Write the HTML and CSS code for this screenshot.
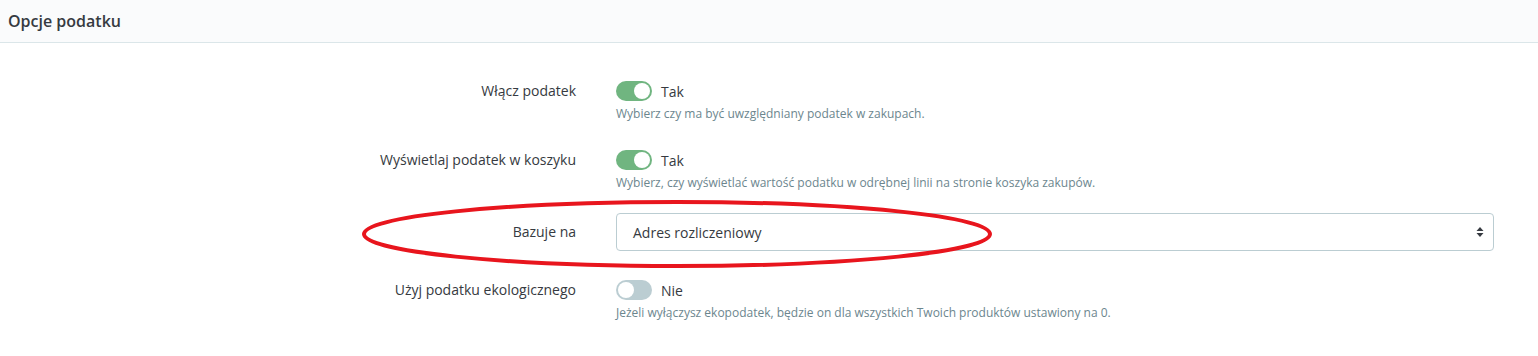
FILE: index.html
```html
<!DOCTYPE html>
<html lang="pl">
<head>
<meta charset="utf-8">
<link rel="stylesheet" href="styles.css">
</head>
<body>
<div class="card">
  <div class="card-header">Opcje podatku</div>
  <div class="card-body">
    <div class="form-row">
      <div class="label">Włącz podatek</div>
      <div class="control">
        <div class="switch-line"><span class="switch on"><span class="knob"></span></span><span class="switch-text">Tak</span></div>
        <div class="help">Wybierz czy ma być uwzględniany podatek w zakupach.</div>
      </div>
    </div>
    <div class="form-row">
      <div class="label">Wyświetlaj podatek w koszyku</div>
      <div class="control">
        <div class="switch-line"><span class="switch on"><span class="knob"></span></span><span class="switch-text">Tak</span></div>
        <div class="help">Wybierz, czy wyświetlać wartość podatku w odrębnej linii na stronie koszyka zakupów.</div>
      </div>
    </div>
    <div class="form-row select-row">
      <div class="label">Bazuje na</div>
      <div class="control">
        <div class="select">
          <span>Adres rozliczeniowy</span>
          <svg class="arrows" width="8" height="12" viewBox="0 0 8 12"><path d="M4 1 L7.5 5 H0.5 Z M4 11 L0.5 7 H7.5 Z" fill="#363a41"/></svg>
        </div>
      </div>
      <svg class="ellipse" width="640" height="72" viewBox="0 0 640 72"><ellipse cx="320" cy="36" rx="313" ry="32" fill="none" stroke="#e8151d" stroke-width="4"/></svg>
    </div>
    <div class="form-row">
      <div class="label">Użyj podatku ekologicznego</div>
      <div class="control">
        <div class="switch-line"><span class="switch off"><span class="knob"></span></span><span class="switch-text">Nie</span></div>
        <div class="help">Jeżeli wyłączysz ekopodatek, będzie on dla wszystkich Twoich produktów ustawiony na 0.</div>
      </div>
    </div>
  </div>
</div>
</body>
</html>
```
FILE: styles.css
```css
* { box-sizing: border-box; }
html, body { margin: 0; padding: 0; background: #fff; }
body {
  font-family: "Open Sans", "Liberation Sans", sans-serif;
  color: #363a41;
  font-size: 14px;
  overflow: hidden;
}
.card { width: 1538px; }
.card-header {
  height: 43px;
  background: #fafbfc;
  border-bottom: 1px solid #dbe6e9;
  padding: 0 8px;
  font-weight: 600;
  font-size: 16px;
  line-height: 42px;
}
.card-body {
  padding: 38px 44px 0 0;
}
.form-row {
  display: grid;
  grid-template-columns: 576px 1fr;
  column-gap: 40px;
  margin-bottom: 28px;
  position: relative;
}
.label {
  text-align: right;
  font-size: 14px;
  line-height: 20px;
}
.switch-line {
  display: flex;
  align-items: center;
  height: 20px;
}
.switch {
  width: 36px;
  height: 20px;
  border-radius: 10px;
  position: relative;
  display: inline-block;
}
.switch.on { background: #70b580; }
.switch.off { background: #bbcdd2; }
.knob {
  position: absolute;
  top: 2px;
  width: 16px;
  height: 16px;
  border-radius: 50%;
  background: #fff;
}
.switch.on .knob { right: 2px; }
.switch.off .knob { left: 2px; }
.switch-text {
  margin-left: 9px;
  font-size: 14px;
}
.help {
  margin-top: 5px;
  font-size: 12px;
  color: #6c868e;
  line-height: 16px;
}
.select-row { margin-top: -6px; margin-bottom: 29px; }
.select-row .label { line-height: 38px; }
.select {
  height: 38px;
  border: 1px solid #bbcdd2;
  border-radius: 4px;
  display: flex;
  align-items: center;
  justify-content: space-between;
  padding: 0 9px 0 16px;
  font-size: 14px;
}
.ellipse {
  position: absolute;
  left: 357px;
  top: -15px;
  pointer-events: none;
}
```
